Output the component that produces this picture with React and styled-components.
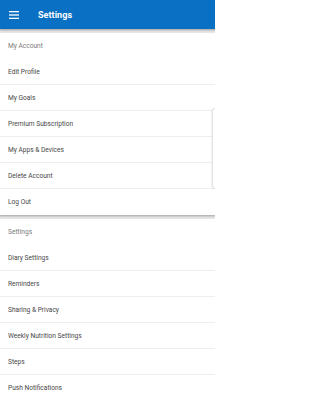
import styled, { createGlobalStyle } from "styled-components";

const GlobalStyle = createGlobalStyle`
  html, body {
    margin: 0;
    padding: 0;
    background: #ffffff;
  }
  body {
    font-family: Roboto, "Liberation Sans", sans-serif;
  }
`;

const sections = [
  {
    title: "My Account",
    items: [
      "Edit Profile",
      "My Goals",
      "Premium Subscription",
      "My Apps & Devices",
      "Delete Account",
      "Log Out",
    ],
  },
  {
    title: "Settings",
    items: [
      "Diary Settings",
      "Reminders",
      "Sharing & Privacy",
      "Weekly Nutrition Settings",
      "Steps",
      "Push Notifications",
    ],
  },
];

const Screen = styled.div`
  position: relative;
  width: 215px;
  height: 399px;
  overflow: hidden;
  background: #e9e9e9;
`;

const TopBar = styled.div`
  display: flex;
  align-items: center;
  height: 29px;
  background: #0a70c3;
  padding-left: 9px;
  gap: 19px;
  position: relative;
  z-index: 2;
  box-shadow: 0 1px 2px rgba(0, 0, 0, 0.25);
`;

const Burger = styled.svg`
  width: 10px;
  height: 8px;
  display: block;
`;

const Title = styled.div`
  color: #ffffff;
  font-size: 9px;
  font-weight: 700;
  letter-spacing: 0.05px;
`;

const Gap = styled.div`
  height: 4px;
  background: linear-gradient(#d6d6d6, #ececec);
`;

const Section = styled.div`
  background: #ffffff;
  box-shadow: 0 1px 2px rgba(0, 0, 0, 0.22);
  position: relative;
  z-index: 1;
`;

const Row = styled.div`
  display: flex;
  align-items: center;
  height: 26px;
  box-sizing: border-box;
  padding-left: 8px;
  font-size: 6.6px;
  font-weight: 400;
  color: ${(p) => (p.heading ? "#7a7a7a" : "#474747")};
  border-bottom: ${(p) => (p.divided ? "1px solid #efefef" : "none")};
`;

const SideCard = styled.div`
  position: absolute;
  top: 108px;
  left: 212px;
  width: 10px;
  height: 79px;
  background: #ffffff;
  border: 1px solid #e2e2e2;
  border-radius: 3px;
  box-shadow: -1px 0 2px rgba(0, 0, 0, 0.05);
  z-index: 3;
`;

const App = () => {
  return (
    <>
      <GlobalStyle />
      <Screen>
        <TopBar>
          <Burger viewBox="0 0 10 8">
            <rect x="0" y="0" width="10" height="1.3" fill="#fff" />
            <rect x="0" y="3.35" width="10" height="1.3" fill="#fff" />
            <rect x="0" y="6.7" width="10" height="1.3" fill="#fff" />
          </Burger>
          <Title>Settings</Title>
        </TopBar>
        {sections.map((section) => (
          <div key={section.title}>
            <Gap />
            <Section>
              <Row heading>{section.title}</Row>
              {section.items.map((item, i) => (
                <Row key={item} divided={i < section.items.length - 1}>
                  {item}
                </Row>
              ))}
            </Section>
          </div>
        ))}
        <SideCard />
      </Screen>
    </>
  );
};

export default App;
